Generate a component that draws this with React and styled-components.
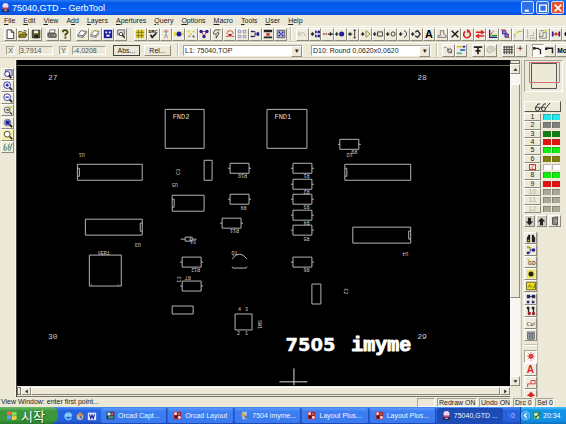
import React, { useState } from 'react';
import styled, { createGlobalStyle, css } from 'styled-components';

const GlobalStyle = createGlobalStyle`
  * { box-sizing: border-box; }
  body { margin: 0; overflow: hidden; }
  button, input, select {
    font: inherit;
    color: inherit;
    margin: 0;
    padding: 0;
    border: none;
    border-radius: 0;
    background: none;
    outline: none;
  }
`;

const raised = css`
  border: 1px solid;
  border-color: #ffffff #8d8a7c #8d8a7c #ffffff;
`;

const sunken = css`
  border: 1px solid;
  border-color: #a5a294 #ffffff #ffffff #a5a294;
`;

const Window = styled.div`
  height: 100vh;
  display: flex;
  flex-direction: column;
  background: #ece9d8;
  color: #222222;
  font-family: 'Liberation Sans', Arial, sans-serif;
  font-size: 7px;
  line-height: 10px;
`;

const TitleBar = styled.header`
  flex: 0 0 15px;
  display: flex;
  align-items: center;
  gap: 2px;
  padding: 0 2px 0 1px;
  background: linear-gradient(#2a7cf5, #0558e8 20%, #0560f5 70%, #0a4fd8);
  color: #ffffff;
`;

const Title = styled.h1`
  flex: 1;
  margin: 0;
  font-size: 9px;
  font-weight: 400;
  line-height: 14px;
`;

const Caption = styled.button`
  width: 13px;
  height: 13px;
  display: flex;
  align-items: center;
  justify-content: center;
  border: 1px solid #c8dcff;
  border-radius: 2px;
  background: ${p => (p.$close ? '#e2532c' : '#2f6fe8')};
`;

const MenuBar = styled.nav`
  flex: 0 0 11px;
  display: flex;
  align-items: center;
  gap: 8px;
  padding-left: 4px;
`;

const MenuItem = styled.button`
  line-height: 10px;
  white-space: nowrap;
`;

const ToolBar = styled.div`
  flex: 0 0 16px;
  display: flex;
  align-items: center;
  overflow: hidden;
  border-top: 1px solid #fbfaf3;
  border-bottom: 1px solid #d2cebe;
  padding-left: 4px;
`;

const ToolGroup = styled.div`
  flex: none;
  display: grid;
  grid-template-columns: repeat(${p => p.$count}, 1fr);
  width: ${p => p.$width}px;
  height: 13px;
  margin-right: ${p => p.$after || 0}px;
`;

const Tool = styled.button`
  min-width: 0;
  height: ${p => p.$height || 13}px;
  display: flex;
  align-items: center;
  justify-content: center;
  overflow: hidden;
  background: ${p => (p.$on ? '#fbfaf4' : p.$tint || '#efecdd')};
  ${p => (p.$on ? sunken : raised)}
  svg { flex: none; }
`;

const Divider = styled.span`
  flex: none;
  width: 2px;
  height: 14px;
  margin: 0 4px 0 2px;
  border-left: 1px solid #c4c0af;
  border-right: 1px solid #ffffff;
`;

const Coordinate = styled.div`
  flex: none;
  display: flex;
  align-items: center;
  gap: 4px;
  margin: 0 4px 0 2px;
  color: #555555;
  label {
    width: 9px;
    height: 9px;
    line-height: 7px;
    text-align: center;
    ${sunken}
  }
  input {
    width: 34px;
    height: 9px;
    line-height: 7px;
    ${sunken}
  }
`;

const Buttons = styled.div`
  flex: none;
  display: flex;
  gap: 4px;
  padding: 0 4px 0 3px;
`;

const PushButton = styled.button`
  width: 27px;
  height: 11px;
  line-height: 9px;
  ${raised}
  ${p => p.$default && css`border-color: #444444;`}
`;

const Picker = styled.div`
  position: relative;
  flex: none;
  width: 120px;
  height: 11px;
  margin-right: ${p => p.$after}px;
  background: #ffffff;
  ${sunken}
  select {
    appearance: none;
    width: 100%;
    height: 9px;
    line-height: 9px;
    padding-left: 1px;
    display: block;
  }
  &::after {
    content: '▾';
    position: absolute;
    top: 0;
    right: 0;
    width: 9px;
    height: 9px;
    line-height: 7px;
    text-align: center;
    background: #ece9d8;
    pointer-events: none;
    ${raised}
  }
`;

const Work = styled.main`
  flex: 1;
  min-height: 0;
  display: flex;
  padding-top: 2px;
`;

const LeftRail = styled.aside`
  flex: 0 0 16px;
  display: flex;
  flex-direction: column;
  padding: 8px 1px 0;
  border-right: 1px solid #f8f7f0;
`;

const RailGroup = styled.div`
  display: grid;
  grid-template-rows: repeat(${p => p.$count}, 1fr);
  height: ${p => p.$height}px;
`;

const Viewport = styled.section`
  flex: 1;
  min-width: 0;
  display: flex;
  flex-direction: column;
  border-left: 1px solid #444444;
`;

const Board = styled.svg`
  display: block;
  flex: 1;
  min-height: 0;
  width: 100%;
  background: #000000;
  font-family: 'Liberation Mono', monospace;
`;

const HScroll = styled.div`
  flex: 0 0 11px;
  display: flex;
  padding: 1px 0;
  border-bottom: 1px solid #77756a;
`;

const VScroll = styled.div`
  flex: 0 0 10px;
  display: flex;
  flex-direction: column;
  margin-bottom: 11px;
  background: #f8f7f1;
`;

const Splitter = styled.span`
  flex: none;
  width: ${p => (p.$wide ? '100%' : '4px')};
  height: ${p => (p.$wide ? '4px' : '100%')};
  border: 1px solid #77756a;
  background: #ece9d8;
`;

const ScrollButton = styled.button`
  flex: 0 0 10px;
  display: flex;
  align-items: center;
  justify-content: center;
  background: #ece9d8;
  ${raised}
`;

const Thumb = styled.span`
  flex: ${p => p.$grow} 1 0;
  background: #ece9d8;
  ${raised}
`;

const Track = styled.span`
  flex: ${p => p.$grow} 1 0;
`;

const RightRail = styled.aside`
  flex: 0 0 45px;
  display: flex;
  flex-direction: column;
  align-items: flex-start;
  margin-left: 1px;
  padding-left: 2px;
  overflow: hidden;
  border-left: 1px solid #c4c0af;
`;

const Preview = styled.div`
  flex: none;
  width: 39px;
  height: 32px;
  ${sunken}
  svg { display: block; }
`;

const ViewButton = styled.button`
  flex: none;
  width: 37px;
  height: 11px;
  margin: 9px 0 1px;
  display: flex;
  align-items: center;
  justify-content: center;
  ${raised}
  border-bottom-color: #55534a;
  border-right-color: #55534a;
`;

const LayerList = styled.div`
  flex: none;
  width: 37px;
  height: 100px;
  display: grid;
  grid-template-rows: repeat(12, 1fr);
`;

const LayerRow = styled.div`
  min-height: 0;
  display: grid;
  grid-template-columns: 18px 8px 8px;
  column-gap: 1px;
  align-items: center;
  overflow: hidden;
`;

const LayerNumber = styled.button`
  height: 100%;
  min-height: 0;
  margin-right: 1px;
  line-height: 6px;
  color: ${p => (p.$off ? '#b4b0a2' : '#222222')};
  ${raised}
  span {
    display: inline-block;
    padding: 0 2px;
    outline: ${p => (p.$active ? '1px solid #d83030' : 'none')};
    outline-offset: -1px;
    color: ${p => (p.$active ? '#d83030' : 'inherit')};
  }
`;

const Swatch = styled.button`
  height: 6px;
  background: ${p => p.$color};
  border-top: 1px solid rgba(80, 80, 60, 0.4);
  border-left: 1px solid rgba(80, 80, 60, 0.4);
`;

const LayerActions = styled.div`
  flex: none;
  display: flex;
  align-items: center;
  gap: 1px;
  width: 37px;
  height: 12px;
  margin: 2px 0 5px;
  button { width: 11px; }
  button:last-child { width: 13px; margin-left: auto; }
`;

const SideTools = styled.div`
  flex: 1;
  min-height: 0;
  width: 14px;
  overflow: hidden;
  border-right: 1px solid #c4c0af;
`;

const SideDivider = styled.hr`
  height: 2px;
  margin: 3px 0 4px;
  border: none;
  border-top: 1px solid #c4c0af;
  border-bottom: 1px solid #ffffff;
`;

const StatusBar = styled.footer`
  flex: 0 0 10px;
  display: flex;
  align-items: center;
  gap: 2px;
  padding: 0 12px 0 1px;
`;

const StatusText = styled.span`
  flex: 1;
  white-space: nowrap;
`;

const StatusPane = styled.span`
  flex: none;
  width: ${p => p.$width}px;
  height: 9px;
  line-height: 8px;
  padding-left: 1px;
  white-space: nowrap;
  ${sunken}
`;

const TaskBar = styled.footer`
  flex: 0 0 17px;
  display: flex;
  align-items: stretch;
  color: #ffffff;
  background: linear-gradient(#4a8cf6, #2563e0 20%, #255fdc 80%, #1a48b5);
`;

const Start = styled.button`
  flex: 0 0 58px;
  display: flex;
  align-items: center;
  gap: 4px;
  padding-left: 6px;
  border-radius: 0 6px 8px 0;
  background: linear-gradient(#6cbb6a, #3b953c 25%, #3a993b 75%, #2a7a2c);
  color: #ffffff;
  font-family: 'Noto Sans CJK KR', sans-serif;
  font-size: 13px;
  line-height: 16px;
  text-shadow: 1px 1px 1px #1f5420;
`;

const QuickLaunch = styled.div`
  flex: 0 0 43px;
  display: flex;
  align-items: center;
  gap: 2px;
  padding-left: 5px;
  button { display: flex; }
`;

const Tasks = styled.div`
  flex: 1;
  min-width: 0;
  display: grid;
  grid-template-columns: repeat(6, 1fr);
  column-gap: 1px;
  padding: 1px 0;
`;

const Task = styled.button`
  min-width: 0;
  display: flex;
  align-items: center;
  gap: 3px;
  padding-left: 5px;
  border-radius: 2px;
  overflow: hidden;
  white-space: nowrap;
  color: #f0f5ff;
  background: ${p => (p.$active ? '#1c4bb4' : 'linear-gradient(#5b97fa, #3c7ef2 25%, #3a79ee)')};
  border-right: 1px solid #1f50bd;
  svg { flex: none; }
`;

const Language = styled.span`
  flex: 0 0 17px;
  line-height: 17px;
  padding-left: 1px;
  white-space: nowrap;
  color: #bcd4ff;
`;

const Tray = styled.div`
  flex: 0 0 46px;
  display: flex;
  align-items: center;
  gap: 2px;
  background: linear-gradient(#4fc0f8, #1293e8 20%, #1290e6 80%, #0c6fc0);
  border-left: 1px solid #0b3f9c;
  svg { flex: none; }
`;

const S = props => <path fill="none" stroke="#222222" {...props} />;
const F = props => <path fill="#222222" {...props} />;
const NAVY = '#1c1c9c';
const RED = '#dc2424';

// every drawing sits on a 12 x 12 grid
const ICONS = {
  new: <path d="M2.5 1h5l3 3v7.500h-8zM7.500 1v3h3" fill="#fff" stroke="#222" />,
  open: <><path d="M1 10V3h3l1 1h4v2" fill="#e8d860" stroke="#5a5210" /><path d="M1 10l2-4h8l-2 4z" fill="#8e8420" stroke="#4a4410" /><S d="M7 2h2l1 1" /></>,
  save: <><path d="M1.500 1.500h9v9h-9z" fill="#66641c" stroke="#222" /><F d="M4 7h5v4H4z" /><F d="M3.500 2h5v3h-5z" fill="#eee" /></>,
  print: <><path d="M4 1h6L8.500 5h-6z" fill="#fff" stroke="#555" /><path d="M1 5h9l1 1v4H2L1 9z" fill="#777" stroke="#444" /><F d="M8 7h2v1H8z" fill="#e8e040" /></>,
  help: <><S d="M3.500 4V2.500L5 1.500h2.500L9 3v1.500L6.500 6.500V8" stroke="#504c08" strokeWidth="2.200" /><F d="M5.300 9.200h2.400v2.200H5.300z" fill="#504c08" /></>,
  film: <><path d="M1 7l4-5 6 1-4 5zM1 7v2l6 1V8M7 10l4-5V3" fill="#fff" stroke="#555" /></>,
  filmNew: <><path d="M1 7l4-5 6 1-4 5zM1 7v2l6 1V8M7 10l4-5" fill="#fff" stroke="#666" /><S d="M2 1l2 2M8 1l-1 2M1 4h2" stroke="#d8c820" /></>,
  chip: <><F d="M1 1h10v10H1z" fill={NAVY} /><F d="M3 3h2v2H3zM7 3h2v2H7zM4 7h4v2H4z" fill="#fff" /></>,
  find: <><path d="M2 1h8v6H2z" fill="#ddd" stroke="#555" /><circle cx="6" cy="6" r="2" fill="#fff" stroke="#333" /><S d="M7.500 7.500l3 3" strokeWidth="2" /></>,
  gridY: <><F d="M1 1h10v10H1z" fill="#e2d430" /><S d="M1 4h10M1 8h10M4 1v10M8 1v10" stroke="#78701c" /></>,
  drc: <><text x="6" y="5" textAnchor="middle" fontSize="5" fontWeight="700" fontFamily="Liberation Sans">DRC</text><S d="M3 7l2 3 5-5" strokeWidth="2" /></>,
  person: <><S d="M6 1v4M3 2l3 3 3-3M4 11l2-5 2 5" stroke="#888" /><circle cx="6" cy="2" r="1.500" fill="#d88" /></>,
  pad: <><F d="M0 3l5 3-5 3z" fill="#e8d820" /><circle cx="6" cy="6" r="3" fill={NAVY} /><F d="M9 5h3v2H9z" fill="#e8d820" /></>,
  dots: <><F d="M2 2h2v2H2zM8 2h2v2H8zM5 5h2v2H5z" fill="#d8c820" /><F d="M3 8h2v1H3zM8 8h2v2H8z" fill={NAVY} /></>,
  tri: <><S d="M3 3h6L6 9z" stroke={RED} /><circle cx="2.500" cy="3" r="2" fill={NAVY} /><circle cx="9.500" cy="3" r="2" fill={NAVY} /><circle cx="6" cy="9" r="2" fill={NAVY} /></>,
  tear: <S d="M10 1H4L2 4v2h3l3-3M8 4v2L5 11V7" stroke="#333" />,
  arch: <><S d="M1 9h3V6M8 6v3h3M2 6a4 4 0 0 1 8 0" stroke="#c84040" /><F d="M4 6h4L6 10z" fill="#a02020" /></>,
  array: <S d="M1.500 1.500h3v3h-3zM7.500 1.500h3v3h-3zM1.500 7.500h3v3h-3zM7.500 7.500h3v3h-3z" stroke="#8888b8" />,
  net: <><S d="M2 3h4v6H2M6 6h4" /><F d="M1 2h3v2H1zM1 8h3v2H1zM8 4h3v4H8z" fill={NAVY} /></>,
  align: <><F d="M1 1h10v3H1zM1 9h10v2H1z" /><F d="M4 5h4v3H4z" fill={RED} /></>,
  frame: <><path d="M1.500 1.500h9v9h-9z" fill="#c8c8e8" stroke="#444" /><F d="M3 3h2v2H3zM7 3h2v2H7zM3 7h2v2H3zM7 7h2v2H7zM5 5h2v2H5z" fill={NAVY} /></>,
  undo: <S d="M2 3v4h4M2 7c2-4 8-4 8 2" stroke="#b4b0a2" />,
  moveSet: <><S d="M1 6h4M3 4v4" strokeWidth="1.600" /><F d="M6 2h2v3H6zM9 2h3v3H9zM6 7h2v3H6zM9 7h3v3H9z" fill={NAVY} /></>,
  moveDots: <><F d="M0 5h2v2H0zM3 5h2v2H3z" fill="#b03030" /><S d="M6 6h6M9 4v4" strokeWidth="1.500" /></>,
  addDot: <><S d="M0 6h4M2 4v4" strokeWidth="1.500" /><circle cx="8" cy="6" r="3" fill={NAVY} /></>,
  addLine: <><S d="M0 6h5M2.500 4v4" strokeWidth="1.500" /><S d="M8 1v10M6.500 1.500h3M6.500 10.500h3" /></>,
  addTri: <><S d="M0 6h4M2 4v4" strokeWidth="1.500" /><S d="M6 2v8l5-4z" stroke="#8c8420" /></>,
  addBox: <><S d="M0 6h4M2 4v4" strokeWidth="1.500" /><S d="M5.500 3.500h6v5h-6z" /></>,
  addCircle: <><S d="M0 6h4M2 4v4" strokeWidth="1.500" /><circle cx="8.500" cy="6" r="2.500" fill="none" stroke="#222" /></>,
  addArc: <><S d="M0 6h4M2 4v4" strokeWidth="1.500" /><S d="M6 2c4 1 4 7 0 8" /></>,
  addDiamond: <><S d="M0 6h4M2 4v4" strokeWidth="1.500" /><S d="M5 4l3-2 3 4-3 4-3-2" strokeWidth="1.500" /></>,
  letter: <text x="6" y="11" textAnchor="middle" fontSize="13" fontWeight="700" fontFamily="Liberation Sans">A</text>,
  poly: <S d="M4 2h4v4l3 2v2H1V8h3z" stroke="#666" />,
  cross: <S d="M2 2l8 8M10 2l-8 8" strokeWidth="1.800" />,
  rotate: <><S d="M4 3a4 4 0 1 0 4 0" stroke={RED} strokeWidth="2" /><F d="M6 0v5l4-3z" fill={RED} /></>,
  swap: <><S d="M1 4h7M4 8.500h7" stroke={RED} strokeWidth="1.800" /><F d="M7 1l5 3-5 3zM5 5.500L0 8.500l5 3z" fill={RED} /></>,
  axes: <><S d="M2 1v9h9" stroke={NAVY} strokeWidth="1.500" /><S d="M4 8h7" stroke="#20a020" strokeWidth="2" /><S d="M2 8l5-6" stroke={RED} /></>,
  copy: <><path d="M3 2h4v4H3zM6 6h4v4H6z" fill="#9090d0" stroke={NAVY} /><S d="M1 1h5M8 4l3 7" stroke={RED} /></>,
  corner: <><S d="M2 11V6h2M6 3h5" stroke="#aaa48c" /><F d="M4 3h3v2H4z" fill="#e8d820" /></>,
  chart: <S d="M2 1v10M4 11h7M5 8h4V5h2" stroke="#888" strokeDasharray="2 1" />,
  panels: <><S d="M2 2h5M2 4v7h8V4H6v5H2" stroke="#777" /><F d="M8 1h3v2H8z" fill="#d8c820" /></>,
  link: <><F d="M1 3h2v6H1zM9 3h2v6H9z" fill={NAVY} /><S d="M2 6h8M6 4v4" stroke={RED} strokeWidth="1.500" /></>,
  arrows: <><circle cx="3" cy="6" r="2.500" /><S d="M5 6h6" strokeWidth="2" /></>,
  magnet: <><S d="M1 3h3l3 3" stroke="#888" /><circle cx="8" cy="7" r="2.500" fill="none" stroke="#444" /><S d="M5 5l6 5" stroke="#555" /></>,
  layers: <><F d="M1 1h6v2H1z" fill="#d8c820" /><F d="M5 5h6v2H5z" fill="#2060e0" /><F d="M1 9h6v2H1z" fill="#40b8a0" /><F d="M8 1h3v2H8z" fill={NAVY} /></>,
  plane: <><S d="M1 2.500h10M6 3v8M3 7h6" strokeWidth="2" /></>,
  palette: <><path d="M1 6c0-6 10-5 10-1 0 3-3 1-4 3s-6 2-6-2z" fill="#ddd9ca" stroke="#aaa" /><F d="M4 4h1v1H4zM7 4h1v1H7z" fill="#999" /></>,
  grid: <S d="M1.500 1v10M4.500 1v10M7.500 1v10M10.500 1v10M0 2.500h12M0 5.500h12M0 8.500h12" stroke="#333" />,
  snap: <><S d="M5 0v8M1 4h8" stroke="#666" strokeDasharray="1 1" /><S d="M5 2v4M3 4h4" stroke="#802020" /></>,
  bend: <><S d="M1 4h5l3 2v5" strokeWidth="1.600" /><F d="M0 2.500h3v3H0z" /></>,
  bendSq: <><S d="M2 4h7v6" strokeWidth="1.800" /><F d="M0 3h3v3H0z" /></>,
  mo: <text x="6" y="9" textAnchor="middle" fontSize="8" fontWeight="700" fontFamily="Liberation Sans">Mo</text>,
  lens: <><circle cx="5" cy="5" r="3.500" fill="#fff" stroke="#333" /><S d="M8 8l3 3" strokeWidth="2" stroke="#333" /></>,
  lensWin: <><path d="M3 1h8v7H3z" fill="#ccd" stroke="#447" /><circle cx="5" cy="6" r="3" fill="#fff" stroke={NAVY} /><S d="M7 8l3 3" strokeWidth="2" /></>,
  lensPlus: <><circle cx="5" cy="5" r="4" fill="#fff" stroke={NAVY} /><S d="M3 5h4M5 3v4" stroke={NAVY} strokeWidth="1.500" /><S d="M8 8l3 3" strokeWidth="2" /></>,
  lensMinus: <><circle cx="5" cy="5" r="4" fill="#fff" stroke={NAVY} /><S d="M3 5h4" stroke={NAVY} strokeWidth="1.500" /><S d="M8 8l3 3" strokeWidth="2" /></>,
  lensPrev: <><circle cx="5" cy="6" r="3.500" fill="#eed" stroke="#555" /><S d="M4 6h3M8 9l3 2" stroke="#333" strokeWidth="1.600" /><F d="M7 2l4-1-1 4z" fill="#d8c820" /></>,
  lensAll: <><circle cx="5.500" cy="5.500" r="4" fill="#dde" stroke="#668" /><path d="M3 3h5v5H3z" fill={NAVY} /><S d="M8 8l3 3" strokeWidth="2" /></>,
  glasses: <S d="M1 6l2-4M6 6l2-4M9 7l2-5M1 8a1.500 2 0 1 0 3 0a1.500 2 0 1 0-3 0M6 8a1.500 2 0 1 0 3 0a1.500 2 0 1 0-3 0" stroke="#2c6a68" />,
  binocular: <><F d="M1 11V6l2-4h2v9zM7 11V2h2l2 4v5z" /><F d="M2 8h2v2H2z" fill="#c8c020" /></>,
  netSide: <><S d="M2 3h3v6H2M5 6h4" stroke="#444" /><F d="M1 1h3v3H1z" fill="#c8b820" /><circle cx="9" cy="6" r="2.200" fill={NAVY} /><F d="M1 8h3v3H1z" fill={NAVY} /></>,
  gd: <><F d="M1 1l4 3-2 1z" fill="#d8c820" /><text x="7" y="10" textAnchor="middle" fontSize="6" fontWeight="700" fill="#555" fontFamily="Liberation Sans">GD</text></>,
  sun: <><F d="M1 1h10v10H1z" fill="#eee25c" /><circle cx="6" cy="6" r="3" fill="#221" /></>,
  ruler: <><path d="M.5 1.500h11v9H.5z" fill="#f0e020" stroke="#555010" /><S d="M2 7h2V4M6 8V5M8 8h2V4" stroke="#6a6410" /></>,
  pairB: <><F d="M1 1h4v4H1zM7 1h4v4H7zM1 8h3v3H1zM7 8h3v3H7z" fill="#28286c" /><S d="M5 3h6" /></>,
  pairR: <><S d="M3 2v6M9 2v6" strokeWidth="1.500" /><F d="M1 1h3v3H1zM7 1h3v3H7z" /><circle cx="4" cy="9" r="2" fill="#a82030" /><circle cx="9" cy="9" r="2" fill="#a82030" /></>,
  cu: <text x="6" y="9" textAnchor="middle" fontSize="7" fill="#333" fontFamily="Liberation Serif">Cu²</text>,
  bin: <><path d="M2 4h8v7H2z" fill="#b8c4c4" stroke="#445" /><S d="M1 2.500h10M4 5v5M6 5v5M8 5v5" stroke="#445" /></>,
  flash: <><circle cx="6" cy="5" r="3" fill={RED} /><S d="M6 0v12M1 5h10M2 1l8 8M10 1L2 9" stroke="#e06060" strokeDasharray="2 1" /></>,
  letterR: <text x="6" y="10" textAnchor="middle" fontSize="11" fontWeight="700" fill={RED} fontFamily="Liberation Sans">A</text>,
  flagR: <S d="M2 11V7h2M4 7h7V3H6v4" stroke={RED} />,
  upR: <F d="M6 1l5 5H8v5H4V6H1z" fill={RED} />,
  down: <F d="M4 1h4v5h3l-5 5-5-5h3z" />,
  up: <F d="M6 1l5 5H8v5H4V6H1z" />,
  door: <><path d="M3 2l6-1v10l-6-1z" fill="#888" stroke="#444" /><F d="M7 5h1v2H7z" fill="#fff" /></>,
  app: <><circle cx="6" cy="4" r="4" fill="#f2d8ee" /><F d="M2 6h8v2H2z" fill="#d83858" /><F d="M1 8h10v4H1z" fill="#26305a" /><F d="M4 9h4v1H4z" fill="#fff" /></>,
  flag: <><F d="M1 2q2-1.500 5 0v4q-3-1.500-5 0z" fill="#f26a3c" /><F d="M6.500 2q3 1 5-.5v4q-2 1.500-5 .5z" fill="#8fd860" /><F d="M1 6.500q2-1.500 5 0v4q-3-1.500-5 0z" fill="#5a9cf0" /><F d="M6.500 6.500q3 1 5-.5v4q-2 1.500-5 .5z" fill="#f6cf40" /></>,
  ie: <><S d="M10 8a4 4 0 1 1 0-3.500H3M3 6h7.500" stroke="#7fd2fb" strokeWidth="1.600" /></>,
  media: <><circle cx="6" cy="7" r="4" fill="#c8b8a0" /><F d="M6 1l3 5H3z" fill="#e0883c" /><F d="M5 7l3-2v5z" fill="#4860a8" /></>,
  word: <><F d="M1 2h10v9H1z" fill="#dfe8ff" /><path d="M3 4l1.500 5L6 5l1.500 4L9 4" fill="none" stroke={NAVY} strokeWidth="1.300" /></>,
  orcad: <><F d="M1 1h10v10H1z" fill="#202428" /><F d="M2 2h4v4H2z" fill="#d8e4e0" /><F d="M7 2h3v4H7z" fill="#e05858" /><F d="M3 7h7v3H3z" fill="#55a088" /></>,
  layout: <><F d="M1 1h10v10H1z" fill="#d83038" /><F d="M2 2h3v3H2zM7 7h3v3H7z" fill="#fff" /><F d="M6 2h4v4H6zM2 6h4v4H2z" fill="#401820" /><F d="M7 3h2v2H7z" fill="#f0b0b0" /></>,
  doc: <><F d="M3 1h6v10H3z" fill="#b8c8d8" /><F d="M2 3h4v4H2z" fill="#e0a040" /><F d="M6 6h4v4H6z" fill="#607898" /></>,
  chevron: <><circle cx="6" cy="6" r="5.500" fill="#2f9cf0" stroke="#9fd4ff" /><S d="M7.500 3L4.500 6l3 3" stroke="#fff" strokeWidth="1.800" /></>,
  safe: <><F d="M1 1h10v10H1z" fill="#2f9a4a" /><F d="M3 3h6v7H3z" fill="#e8f4e0" /><S d="M3 6l2 3 6-7" stroke="#207038" strokeWidth="1.800" /></>,
  min: <F d="M2 8h5v2.500H2z" fill="#fff" />,
  max: <path d="M2 2.500h8v7.500H2z" fill="none" stroke="#fff" strokeWidth="1.600" />,
  close: <S d="M2 2l8 8M10 2l-8 8" stroke="#fff" strokeWidth="2" />,
  arrowUp: <F d="M6 3l5 6H1z" />,
  arrowDown: <F d="M6 9l5-6H1z" />,
  arrowLeft: <F d="M3 6l6-5v10z" />,
  arrowRight: <F d="M9 6L3 1v10z" />,
};

const Icon = ({ name, size = 10 }) => (
  <svg width={size} height={size} viewBox="0 0 12 12" aria-hidden="true">{ICONS[name]}</svg>
);

const MENUS = [
  ['', 'F', 'ile'], ['', 'E', 'dit'], ['', 'V', 'iew'], ['A', 'd', 'd'], ['', 'L', 'ayers'],
  ['', 'A', 'pertures'], ['', 'Q', 'uery'], ['', 'O', 'ptions'], ['', 'M', 'acro'],
  ['', 'T', 'ools'], ['', 'U', 'ser'], ['', 'H', 'elp'],
];

const TOOL_GROUPS = [
  { width: 38, after: 4, tools: ['new', 'open', 'save'] },
  { width: 25, after: 5, tools: ['print', 'help'] },
  { width: 51, after: 7, tools: ['film', 'filmNew', 'chip', 'find'] },
  { width: 153, after: 1, tools: ['gridY', 'drc', 'person', 'pad', 'dots', 'tri', 'tear', 'arch', 'array', 'net', 'align', 'frame'] },
  {
    width: 279,
    tools: ['undo', 'moveSet', 'moveDots', 'addDot', 'addLine', 'addTri', 'addBox', 'addCircle', 'addArc', 'addDiamond', 'letter',
      'poly', 'cross', 'rotate', 'swap', 'axes', 'copy', 'corner', 'chart', 'panels', 'link', 'arrows'],
  },
];

const ZOOM_TOOLS = ['lensWin', 'lensPlus', 'lensMinus', 'lensPrev', 'lensAll', 'lens', 'glasses'];
const SIDE_TOOLS = ['binocular', 'netSide', 'gd', 'sun', 'ruler', 'pairB', 'pairR', 'cu', 'bin'];

const LAYERS = ['#20e8f0', '#808080', '#108010', '#e81010', '#10f010', '#808010', '#ffffff', '#10f010', '#e81010'];

const TASKS = [
  ['orcad', 'Orcad Capt...'],
  ['layout', 'Orcad Layout'],
  ['doc', '7504 imyme...'],
  ['layout', 'Layout Plus...'],
  ['layout', 'Layout Plus...'],
  ['app', '75040,GTD ...'],
];

// x, y, width, height in board units
const OUTLINES = [
  [165, 109, 39, 39], [267, 109, 40, 39],
  [204, 160, 8, 20], [312, 284, 9, 20], [172, 306, 21, 8],
  [89, 255, 32, 31], [235, 314, 17, 16],
];

const CHIPS = [
  [77, 164, 65, 16, 'left'], [172, 195, 32, 16, 'left'], [345, 164, 66, 16, 'left'],
  [85, 219, 57, 16, 'right'], [353, 227, 58, 16, 'right'],
];

const RESISTORS = [
  [230, 163], [230, 194], [222, 218], [182, 257], [182, 281],
  [293, 163], [293, 179], [293, 194], [293, 210], [293, 225], [293, 257], [340, 139],
];

// centre x, centre y, rotation
const LABELS = [
  ['U1', 82, 155, 180], ['U5', 175, 185, 180], ['C3', 178, 172, 270], ['U3', 138, 245, 180],
  ['U4', 406, 254, 180], ['U2', 350, 155, 180], ['R9', 355, 152, 180],
  ['R10', 243, 176, 180], ['R8', 244, 208, 180], ['R11', 235, 231, 180], ['R12', 196, 270, 180],
  ['R1', 307, 176, 180], ['R2', 307, 192, 180], ['R3', 307, 207, 180], ['R4', 307, 223, 180],
  ['R5', 307, 239, 180], ['R6', 307, 270, 180], ['R7', 188, 278, 180], ['C1', 179, 280, 90],
  ['D1', 193, 242, 180], ['VER1', 104, 253, 0], ['Q1', 235, 253, 0], ['C2', 347, 292, 90],
  ['4', 240, 310, 0], ['3', 247, 310, 0], ['2', 239, 334, 0], ['1', 247, 334, 0], ['SW1', 260, 325, 90],
];

const BoardView = () => (
  <Board viewBox="17 60 494 326" preserveAspectRatio="xMinYMin meet" role="img" aria-label="75040.GTD">
    <path d="M17 65.500h494" stroke="#6a7046" strokeWidth="1" />
    <g fill="none" stroke="#b4b4b4">
      {OUTLINES.map(([x, y, w, h]) => (
        <path key={`${x}-${y}`} d={`M${x + 0.5} ${y + 0.5}h${w}v${h}h${-w}z`} />
      ))}
      {CHIPS.map(([x, y, w, h, side]) => (
        <path
          key={`${x}-${y}`}
          d={`M${x + 0.5} ${y + 0.5}h${w}v${h}h${-w}z`
            + (side === 'left' ? 'm0 4h2v8h-2' : `m${w} 4h-2v8h2`)}
        />
      ))}
      {RESISTORS.map(([x, y]) => (
        <path key={`${x}-${y}`} d={`M${x + 0.5} ${y + 0.5}h19v10h-19zm0 5h-2m21 0h2`} />
      ))}
      <path d="M181 239.500h4.500v-2h7v4h-7v-2m7 0h4.500M190.500 238v3" />
      <path d="M91.500 286v-1M118.500 286v-1" />
      <path d="M232.500 259.500l4-4q3.500-2 7 0l4 4M232.500 267l1 1.500h13l1-1.500" />
      <path d="M294.500 369v17M280 382.500h28" stroke="#dddddd" />
    </g>
    <g fill="#cccccc" fontSize="8">
      <text x="48" y="80">27</text>
      <text x="418" y="80">28</text>
      <text x="48" y="340">30</text>
      <text x="418" y="340">29</text>
    </g>
    <g fill="#dddddd" fontSize="7">
      <text x="173" y="119">FND2</text>
      <text x="275" y="119">FND1</text>
    </g>
    <g fill="#cccccc" fontSize="5" textAnchor="middle">
      {LABELS.map(([text, x, y, angle]) => (
        <text key={text} transform={`translate(${x} ${y}) rotate(${angle})`} y="2">{text}</text>
      ))}
    </g>
    <text y="352" fill="#ffffff" stroke="#ffffff" strokeLinejoin="round" fontWeight="700">
      <tspan x="286" fontFamily="DejaVu Sans" fontSize="18" strokeWidth="0.400">7505 </tspan>
      <tspan x="352" fontSize="20">imyme</tspan>
    </text>
  </Board>
);

const App = () => {
  const [activeLayer, setActiveLayer] = useState(7);

  return (
    <Window>
      <GlobalStyle />
      <TitleBar>
        <Icon name="app" size={9} />
        <Title>75040,GTD – GerbTool</Title>
        <Caption aria-label="Minimize"><Icon name="min" /></Caption>
        <Caption aria-label="Maximize"><Icon name="max" /></Caption>
        <Caption $close aria-label="Close"><Icon name="close" /></Caption>
      </TitleBar>

      <MenuBar>
        {MENUS.map(([before, key, after]) => (
          <MenuItem key={before + key + after}>{before}<u>{key}</u>{after}</MenuItem>
        ))}
      </MenuBar>

      <ToolBar>
        {TOOL_GROUPS.map((group, i) => (
          <React.Fragment key={group.tools[0]}>
            {i === 4 && <Divider />}
            <ToolGroup $count={group.tools.length} $width={group.width} $after={group.after}>
              {group.tools.map(name => (
                <Tool key={name} aria-label={name}><Icon name={name} /></Tool>
              ))}
            </ToolGroup>
          </React.Fragment>
        ))}
      </ToolBar>

      <ToolBar>
        <Coordinate>
          <label htmlFor="pos-x">X</label>
          <input id="pos-x" defaultValue="3,7914" />
        </Coordinate>
        <Coordinate>
          <label htmlFor="pos-y">Y</label>
          <input id="pos-y" defaultValue="-4,0208" />
        </Coordinate>
        <Buttons>
          <PushButton $default>Abs...</PushButton>
          <PushButton>Rel...</PushButton>
        </Buttons>
        <Divider />
        <Picker $after={8}>
          <select aria-label="Layer"><option>L1: 75040,TOP</option></select>
        </Picker>
        <Picker $after={3}>
          <select aria-label="Aperture"><option>D10: Round 0,0620x0,0620</option></select>
        </Picker>
        <Divider />
        <ToolGroup $count={2} $width={25} $after={5}>
          <Tool aria-label="Snap"><Icon name="magnet" /></Tool>
          <Tool aria-label="Layers"><Icon name="layers" /></Tool>
        </ToolGroup>
        <ToolGroup $count={2} $width={25} $after={5}>
          <Tool aria-label="Plane"><Icon name="plane" /></Tool>
          <Tool aria-label="Colors"><Icon name="palette" /></Tool>
        </ToolGroup>
        <ToolGroup $count={2} $width={25} $after={5}>
          <Tool aria-label="Grid"><Icon name="grid" /></Tool>
          <Tool aria-label="Grid snap"><Icon name="snap" /></Tool>
        </ToolGroup>
        <ToolGroup $count={3} $width={36}>
          <Tool $on aria-label="Any angle"><Icon name="bend" /></Tool>
          <Tool aria-label="Square"><Icon name="bendSq" /></Tool>
          <Tool aria-label="Mode"><Icon name="mo" /></Tool>
        </ToolGroup>
      </ToolBar>

      <Work>
        <LeftRail>
          <RailGroup $count={7} $height={85}>
            {ZOOM_TOOLS.map(name => (
              <Tool key={name} $height={12} $tint={name === 'lens' ? '#f6f0a8' : undefined} aria-label={name}>
                <Icon name={name} />
              </Tool>
            ))}
          </RailGroup>
        </LeftRail>

        <Viewport>
          <BoardView />
          <HScroll>
            <Splitter />
            <ScrollButton aria-label="Scroll left"><Icon name="arrowLeft" size={5} /></ScrollButton>
            <Thumb $grow={1} />
            <ScrollButton aria-label="Scroll right"><Icon name="arrowRight" size={5} /></ScrollButton>
          </HScroll>
        </Viewport>

        <VScroll>
          <Splitter $wide />
          <ScrollButton aria-label="Scroll up"><Icon name="arrowUp" size={5} /></ScrollButton>
          <Track $grow={10} />
          <Thumb $grow={213} />
          <Track $grow={79} />
          <ScrollButton aria-label="Scroll down"><Icon name="arrowDown" size={5} /></ScrollButton>
        </VScroll>

        <RightRail>
          <Preview>
            <svg width="37" height="30" viewBox="0 0 37 30" fill="none">
              <path d="M6.500 2.500h25v25h-25z" stroke="#555555" />
              <path d="M4.500 1.500h30v20h-30z" stroke="#d87070" />
            </svg>
          </Preview>
          <ViewButton aria-label="View layers">
            <svg width="18" height="10" viewBox="0 0 18 10" fill="none" stroke="#333333">
              <path d="M1 6l3-4h2M7 6l3-4h2M11 7l5-6M5 6h2" />
              <circle cx="3.500" cy="7" r="2" />
              <circle cx="9.500" cy="7" r="2" />
            </svg>
          </ViewButton>
          <LayerList>
            {Array.from({ length: 12 }, (_, i) => (
              <LayerRow key={i}>
                <LayerNumber $active={activeLayer === i + 1} $off={!LAYERS[i]} onClick={() => setActiveLayer(i + 1)}>
                  <span>{i + 1}</span>
                </LayerNumber>
                <Swatch $color={LAYERS[i] || '#aca899'} aria-label={`Draw color ${i + 1}`} />
                <Swatch $color={LAYERS[i] || '#aca899'} aria-label={`Flash color ${i + 1}`} />
              </LayerRow>
            ))}
          </LayerList>
          <LayerActions>
            <Tool $height={12} $tint="#d0cdbf" aria-label="Layer down"><Icon name="down" size={9} /></Tool>
            <Tool $height={12} $tint="#d0cdbf" aria-label="Layer up"><Icon name="up" size={9} /></Tool>
            <Tool $height={12} aria-label="Exit"><Icon name="door" /></Tool>
          </LayerActions>
          <SideTools>
            <RailGroup $count={9} $height={109}>
              {SIDE_TOOLS.map(name => (
                <Tool key={name} $height={12} aria-label={name}><Icon name={name} /></Tool>
              ))}
            </RailGroup>
            <SideDivider />
            <RailGroup $count={4} $height={52}>
              <Tool $on aria-label="Flash"><Icon name="flash" /></Tool>
              <Tool aria-label="Text"><Icon name="letterR" size={11} /></Tool>
              <Tool aria-label="Flag"><Icon name="flagR" /></Tool>
              <Tool aria-label="Raise"><Icon name="upR" /></Tool>
            </RailGroup>
          </SideTools>
        </RightRail>
      </Work>

      <StatusBar>
        <StatusText>View Window: enter first point...</StatusText>
        <StatusPane $width={18} />
        <StatusPane $width={40}>Redraw ON</StatusPane>
        <StatusPane $width={32}>Undo ON</StatusPane>
        <StatusPane $width={20}>Drc 0</StatusPane>
        <StatusPane $width={19}>Sel 0</StatusPane>
      </StatusBar>

      <TaskBar>
        <Start><Icon name="flag" size={11} />시작</Start>
        <QuickLaunch>
          <button aria-label="Internet Explorer"><Icon name="ie" /></button>
          <button aria-label="Media Player"><Icon name="media" /></button>
          <button aria-label="Word"><Icon name="word" /></button>
        </QuickLaunch>
        <Tasks>
          {TASKS.map(([icon, text], i) => (
            <Task key={i} $active={i === 5}><Icon name={icon} size={9} />{text}</Task>
          ))}
        </Tasks>
        <Language>〈0</Language>
        <Tray>
          <Icon name="chevron" size={9} />
          <Icon name="safe" size={9} />
          <span>20:34</span>
        </Tray>
      </TaskBar>
    </Window>
  );
};

export default App;
